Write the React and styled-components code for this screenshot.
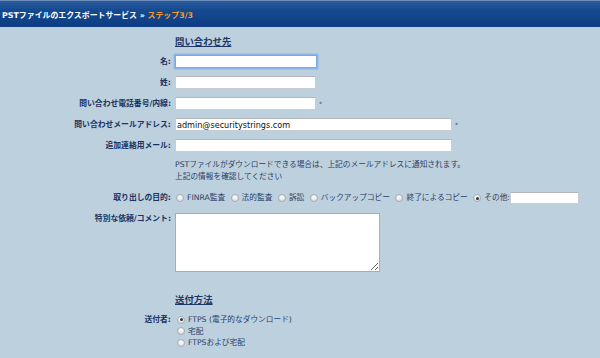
import styled, { createGlobalStyle } from 'styled-components';

const GlobalStyle = createGlobalStyle`
  html, body {
    margin: 0;
    padding: 0;
    background: #bdd0de;
  }
  body {
    font-family: "DejaVu Sans", "Noto Sans CJK JP", sans-serif;
    color: #1c3463;
  }
`

const Header = styled.div`
  height: 27px;
  box-sizing: border-box;
  border-top: 1px solid #6f8fbd;
  background: linear-gradient(to bottom, #2a5b9d 0%, #164a90 35%, #0c3c82 100%);
  display: flex;
  align-items: center;
  padding-left: 2px;
`
const Title = styled.div`
  font-size: 7.9px;
  font-weight: bold;
  color: #ffffff;
  white-space: nowrap;
`
const Step = styled.span`
  color: #f39a2c;
`
const Main = styled.div`
  padding-top: 4px;
`
const Heading = styled.div`
  height: 20px;
  display: flex;
  align-items: center;
  margin-left: 175px;
  margin-top: ${p => p.$mt || 0}px;
  font-size: 9.4px;
  font-weight: bold;
  text-decoration: underline;
  color: #1d3867;
`
const Row = styled.div`
  display: grid;
  grid-template-columns: 171px auto;
  column-gap: 4px;
  height: ${p => p.$h || 21}px;
  align-items: ${p => (p.$top ? 'start' : 'center')};
  margin-top: ${p => p.$mt || 0}px;
`
const Label = styled.div`
  text-align: right;
  font-size: 7.8px;
  font-weight: bold;
  line-height: 12px;
  white-space: nowrap;
  color: #1a325f;
`
const Field = styled.div`
  display: flex;
  align-items: center;
  gap: 3px;
`
const Input = styled.input`
  box-sizing: border-box;
  width: ${p => p.$w}px;
  height: ${p => p.$h || 13}px;
  margin: 0;
  padding: 0 1px;
  border: 1px solid #c9cdd2;
  border-top-color: #b4b8bd;
  background: #fff;
  font-family: "DejaVu Sans", sans-serif;
  font-size: 8.1px;
  color: #111;
  outline: none;
  ${p => p.$focus && `
    border-color: #7ea9df;
    box-shadow: 0 0 0 1.5px #8db6ea;
  `}
`
const Req = styled.span`
  font-size: 6px;
  color: #2b4370;
  line-height: 1;
`
const Note = styled.div`
  margin-left: 175px;
  padding-top: 3px;
  font-size: 7.7px;
  line-height: 12px;
  color: #2a3f68;
  white-space: nowrap;
`
const Options = styled.div`
  display: flex;
  align-items: center;
  padding-left: 1px;
`
const Option = styled.label`
  display: flex;
  align-items: center;
  gap: 3px;
  font-size: 7.7px;
  line-height: 11.5px;
  height: 11.5px;
  color: #2a3f68;
  white-space: nowrap;
  margin-right: ${p => p.$mr ?? 5.5}px;
`
const Radio = styled.input.attrs({ type: 'radio' })`
  appearance: none;
  box-sizing: border-box;
  width: 8px;
  height: 8px;
  margin: 0;
  border-radius: 50%;
  border: 1px solid #a7adb4;
  background: radial-gradient(circle at 50% 30%, #ffffff 0%, #e4e6e9 60%, #cfd3d8 100%);
  position: relative;
  &:checked::after {
    content: '';
    position: absolute;
    left: 1.5px;
    top: 1.5px;
    width: 3px;
    height: 3px;
    border-radius: 50%;
    background: #333;
  }
`
const TextArea = styled.textarea`
  box-sizing: border-box;
  width: 205px;
  height: 59px;
  margin: 0;
  border: 1px solid #a9adb2;
  background: #fff;
  resize: both;
`
const Stack = styled.div`
  display: flex;
  flex-direction: column;
  padding-left: 2px;
`

function App() {
  return <>
    <GlobalStyle />
    <Header>
      <Title>PSTファイルのエクスポートサービス » <Step>ステップ3/3</Step></Title>
    </Header>
    <Main>
      <Heading>問い合わせ先</Heading>
      <Row>
        <Label>名:</Label>
        <Field><Input $w={142} $focus /></Field>
      </Row>
      <Row>
        <Label>姓:</Label>
        <Field><Input $w={141} /></Field>
      </Row>
      <Row>
        <Label>問い合わせ電話番号/内線:</Label>
        <Field><Input $w={141} /><Req>*</Req></Field>
      </Row>
      <Row>
        <Label>問い合わせメールアドレス:</Label>
        <Field><Input $w={277} defaultValue="admin@securitystrings.com" /><Req>*</Req></Field>
      </Row>
      <Row>
        <Label>追加連絡用メール:</Label>
        <Field><Input $w={277} /></Field>
      </Row>
      <Note>
        PSTファイルがダウンロードできる場合は、上記のメールアドレスに通知されます。<br />
        上記の情報を確認してください
      </Note>
      <Row $h={20} $mt={5}>
        <Label>取り出しの目的:</Label>
        <Options>
          <Option><Radio name="purpose" />FINRA監査</Option>
          <Option><Radio name="purpose" />法的監査</Option>
          <Option><Radio name="purpose" />訴訟</Option>
          <Option><Radio name="purpose" />バックアップコピー</Option>
          <Option><Radio name="purpose" />終了によるコピー</Option>
          <Option $mr={0}><Radio name="purpose" defaultChecked />その他:</Option>
          <Input $w={69} $h={12} />
        </Options>
      </Row>
      <Row $top $h={59} $mt={5}>
        <Label>特別な依頼/コメント:</Label>
        <TextArea />
      </Row>
      <Heading $mt={17}>送付方法</Heading>
      <Row $top $h={35} $mt={5}>
        <Label>送付者:</Label>
        <Stack>
          <Option><Radio name="ship" defaultChecked />FTPS (電子的なダウンロード)</Option>
          <Option><Radio name="ship" />宅配</Option>
          <Option><Radio name="ship" />FTPSおよび宅配</Option>
        </Stack>
      </Row>
    </Main>
  </>
}

export default App
